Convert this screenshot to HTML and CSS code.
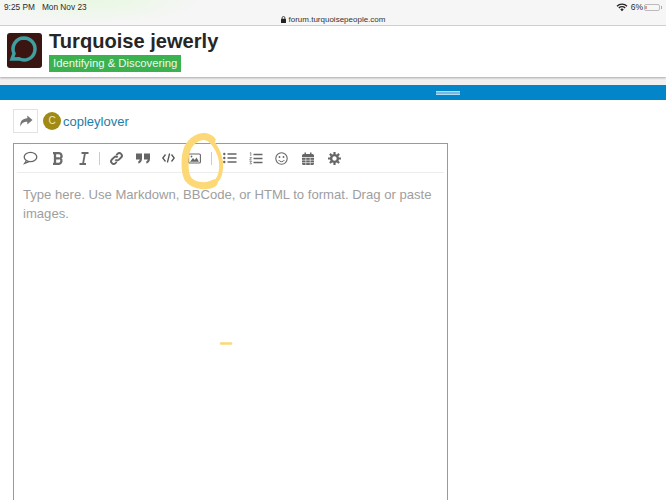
FILE: index.html
```html
<!DOCTYPE html>
<html lang="en">
<head>
<meta charset="utf-8">
<title>Turquoise jewerly</title>
<link rel="stylesheet" href="styles.css">
</head>
<body>
<div class="status">
  <div class="status-row">
    <span class="time">9:25 PM</span><span class="date">Mon Nov 23</span>
    <span class="spacer"></span>
    <svg class="wifi" width="12" height="9" viewBox="0 0 12 9"><path d="M1 3.2a7 7 0 0 1 10 0M2.8 5a4.6 4.6 0 0 1 6.4 0" fill="none" stroke="#222" stroke-width="1.3"/><path d="M4.3 6.4a2.4 2.4 0 0 1 3.4 0L6 8.2z" fill="#222"/></svg>
    <span class="pct">6%</span>
    <span class="battery"><span class="charge"></span></span><span class="nub"></span>
  </div>
  <div class="url-row">
    <svg width="5" height="7" viewBox="0 0 5 7"><rect y="2.8" width="5" height="4.2" rx=".6" fill="#222"/><path d="M1.1 3V1.9a1.4 1.4 0 0 1 2.8 0V3" fill="none" stroke="#222" stroke-width=".8"/></svg>
    <span>forum.turquoisepeople.com</span>
  </div>
</div>
<header class="site">
  <svg class="logo" width="35" height="35" viewBox="0 0 35 35"><rect width="35" height="35" rx="3" fill="#3a1512"/><path d="M17 5a11 11 0 1 1-5 20.800L5 26 7 20.500A11 11 0 0 1 17 5z" fill="none" stroke="#3f9ea0" stroke-width="3.500"/></svg>
  <div class="titles">
    <h1>Turquoise jewerly</h1>
    <span class="badge">Identifying &amp; Discovering</span>
  </div>
</header>
<div class="gap"></div>
<div class="blue"><span class="grip"></span></div>
<main>
  <div class="reply-row">
    <span class="action">
      <svg width="14" height="12" viewBox="0 0 14 12"><path d="M8.300 0.500 13.500 5 8.300 9.500V6.800C5 6.800 2.800 7.800 1.500 11.500 0.500 6.500 3.500 3.400 8.300 3.200z" fill="#777"/></svg>
    </span>
    <span class="avatar">C</span>
    <span class="user">copleylover</span>
  </div>
  <section class="editor">
    <div class="toolbar">
      <span class="tool"><svg width="15" height="14" viewBox="0 0 15 14"><ellipse cx="7.500" cy="6" rx="6.300" ry="4.700" fill="none" stroke="#666" stroke-width="1.300"/><path d="M3.500 9.500 1.500 12.500 6 10.600" fill="none" stroke="#666" stroke-width="1.200"/></svg></span>
      <span class="tool tool-b"><svg width="12" height="13" viewBox="0 0 12 13"><path d="M1 1.200h5.800a2.800 2.800 0 0 1 1.400 5.200 3 3 0 0 1-1.200 5.400H1M3 1.200v10.600M3 6.400h4.200" fill="none" stroke="#6a6a6a" stroke-width="2.300"/></svg></span>
      <span class="tool tool-i"><svg width="10" height="13" viewBox="0 0 10 13"><path d="M2.500 1h7M.5 12H7M6 1 4 12" fill="none" stroke="#6a6a6a" stroke-width="1.800"/></svg></span>
      <span class="sep"></span>
      <span class="tool tool-link"><svg width="13" height="13" viewBox="0 0 13 13"><g fill="none" stroke="#666" stroke-width="1.900"><path d="M5.300 7.700a2.500 2.500 0 0 0 3.600 0l2.200-2.200a2.500 2.500 0 0 0-3.600-3.600L6.300 3.100"/><path d="M7.700 5.300a2.500 2.500 0 0 0-3.600 0L1.900 7.500a2.500 2.500 0 0 0 3.600 3.600l1.200-1.200"/></g></svg></span>
      <span class="tool tool-quote"><svg width="14" height="11" viewBox="0 0 14 11"><path d="M0 .5h6v5.300C6 8.500 4.500 10 2.300 10.500V8.300C3.300 8 3.700 7.400 3.700 6.500H0zM8 .5h6v5.300c0 2.700-1.500 4.200-3.700 4.700V8.300c1-.3 1.400-.9 1.400-1.800H8z" fill="#666"/></svg></span>
      <span class="tool tool-code"><svg width="13" height="10" viewBox="0 0 13 10"><path d="M3.500 1.500 .8 5l2.700 3.500M9.500 1.500 12.200 5 9.500 8.500M7.600.5 5.400 9.500" fill="none" stroke="#555" stroke-width="1.300"/></svg></span>
      <span class="tool tool-img"><svg width="13" height="11" viewBox="0 0 13 11"><rect x=".6" y="1" width="11.800" height="9" rx="1" fill="none" stroke="#666" stroke-width="1.100"/><path d="M2 8.800 5 5l1.800 2 1.700-2.500 2.500 4.300z" fill="#666"/><circle cx="3.500" cy="3.500" r=".9" fill="#666"/></svg></span>
      <span class="sep sep-2"></span>
      <span class="tool tool-list"><svg width="14" height="12" viewBox="0 0 14 12"><path d="M4.500 2h9M4.500 6h9M4.500 10h9" stroke="#666" stroke-width="1.500"/><circle cx="1.300" cy="2" r="1.200" fill="#666"/><circle cx="1.300" cy="6" r="1.200" fill="#666"/><circle cx="1.300" cy="10" r="1.200" fill="#666"/></svg></span>
      <span class="tool tool-ol"><svg width="14" height="13" viewBox="0 0 14 13"><path d="M4.500 2.500h9M4.500 6.500h9M4.500 10.500h9" stroke="#666" stroke-width="1.500"/><path d="M.8 1 1.800.6V4M.6 5.600h2L.6 8h2M.6 9.500h2l-1 1 1 1.300H.6" fill="none" stroke="#666" stroke-width=".7"/></svg></span>
      <span class="tool tool-smile"><svg width="13" height="13" viewBox="0 0 13 13"><circle cx="6.500" cy="6.500" r="5.700" fill="none" stroke="#666" stroke-width="1.100"/><circle cx="4.500" cy="5" r=".9" fill="#666"/><circle cx="8.500" cy="5" r=".9" fill="#666"/><path d="M3.600 8a3.400 3.400 0 0 0 5.800 0" fill="none" stroke="#666" stroke-width="1"/></svg></span>
      <span class="tool tool-cal"><svg width="12" height="13" viewBox="0 0 12 13"><path d="M0 3.500A1.500 1.500 0 0 1 1.500 2H2.500V.5H4V2H8V.5H9.500V2h1A1.500 1.500 0 0 1 12 3.500V5H0zM0 5.800H12V11.500A1.500 1.500 0 0 1 10.500 13H1.500A1.500 1.500 0 0 1 0 11.500z" fill="#666"/><path d="M3.800 5.800V13M8.200 5.800V13M0 8.200H12M0 10.600H12" stroke="#fff" stroke-width=".6"/></svg></span>
      <span class="tool tool-gear"><svg width="13" height="13" viewBox="0 0 13 13"><circle cx="6.500" cy="6.500" r="3.400" fill="none" stroke="#666" stroke-width="2.400"/><path d="M6.500 0v13M0 6.500h13M1.900 1.900l9.200 9.200M11.100 1.900l-9.200 9.200" stroke="#666" stroke-width="2.200" stroke-dasharray="2.200 8.600 2.200"/></svg></span>
    </div>
    <p class="placeholder">Type here. Use Markdown, BBCode, or HTML to format. Drag or paste images.</p>
  </section>
</main>
<svg class="scribble" width="666" height="500" viewBox="0 0 666 500">
  <path d="M212 140C205 133 194 137 188 147 184 156 184 172 188 179 194 187 208 187 214 183" fill="none" stroke="#fcd976" stroke-width="7" stroke-linecap="round"/>
  <path d="M214 183C220 179 222 170 221 162 220 154 216 146 210 140" fill="none" stroke="#fcd976" stroke-width="4" stroke-linecap="round"/>
  <path d="M221 343.500h10" stroke="#fcd976" stroke-width="2.500" stroke-linecap="round"/>
</svg>
</body>
</html>
```

FILE: styles.css
```css
* { box-sizing: border-box; }
html, body { margin: 0; padding: 0; }
body {
  width: 666px;
  height: 500px;
  overflow: hidden;
  background: #fff;
  font-family: "Liberation Sans", Arial, sans-serif;
  position: relative;
}
.status {
  height: 26px;
  background: radial-gradient(ellipse 110px 24px at 95px 0, #e8f8e2 0%, #f6f6f6 100%);
  border-bottom: 1px solid #d4d4d4;
  color: #2a2a2a;
}
.status-row {
  height: 13px;
  padding: 1px 4px 0;
  display: flex;
  align-items: center;
  font-size: 8.300px;
}
.date { margin-left: 7px; }
.spacer { flex: 1; }
.wifi { margin-right: 3px; }
.pct { margin-right: 1px; font-size: 8.500px; }
.battery {
  width: 16px;
  height: 7px;
  border: 1px solid #bbb;
  border-radius: 2px;
  display: flex;
  padding: 1px 0 1px 0;
}
.charge { width: 2px; background: #e09a9a; }
.nub { width: 1px; height: 3px; background: #aaa; margin-left: 1px; margin-right: 0; }
.url-row {
  height: 12px;
  display: flex;
  align-items: center;
  justify-content: center;
  gap: 3px;
  font-size: 8px;
  color: #333;
}
.site {
  height: 51px;
  padding: 7px 7px 0;
  display: flex;
  gap: 7px;
  background: #fff;
  box-shadow: 0 1px 2px rgba(0, 0, 0, .3);
  position: relative;
}
.logo { flex: none; }
.titles { display: flex; flex-direction: column; align-items: flex-start; }
h1 {
  margin: -4px 0 0;
  font-size: 20.100px;
  line-height: 25px;
  font-weight: 700;
  color: #262626;
}
.badge {
  height: 17px;
  width: 132px;
  margin-top: 1px;
  padding-left: 4px;
  font-size: 11.300px;
  line-height: 17px;
  white-space: nowrap;
  color: #eef8ee;
  background: #3cb14f;
}
.gap { height: 8px; background: #f0f0f0; }
.blue {
  height: 15px;
  background: #0285c9;
  display: flex;
  align-items: center;
  padding-left: 436px;
}
.grip {
  width: 24px;
  height: 4px;
  background: #6fbce6;
  border-top: 1px solid #b0dcf2;
  border-bottom: 1px solid #b0dcf2;
}
main { padding: 9px 13px 0; }
.reply-row { display: flex; align-items: center; height: 24px; }
.action {
  width: 25px;
  height: 24px;
  border: 1px solid #e2e2e2;
  display: flex;
  align-items: center;
  justify-content: center;
  margin-right: 5px;
}
.avatar {
  width: 18px;
  height: 18px;
  border-radius: 50%;
  background: #a18a14;
  color: #f0e6c0;
  font-size: 10px;
  line-height: 18px;
  text-align: center;
  margin-right: 2px;
}
.user { color: #1a7ea8; font-size: 13px; }
.editor {
  margin-top: 10px;
  width: 435px;
  height: 357px;
  border: 1px solid #9a9a9a;
  border-bottom: 0;
  padding: 0 1px;
}
.toolbar {
  height: 29px;
  border-bottom: 1px solid #ececec;
  display: flex;
  align-items: center;
  padding-left: 6px;
  margin: 0 2px;
}
.tool { display: flex; flex: none; }
.tool-b { margin-left: 14px; }
.tool-i { margin-left: 15px; }
.sep { width: 1px; height: 13px; background: #ccc; margin-left: 10px; flex: none; }
.tool-link { margin-left: 10px; }
.tool-quote { margin-left: 13px; }
.tool-code { margin-left: 12px; }
.tool-img { margin-left: 13px; }
.sep-2 { margin-left: 10px; }
.tool-list { margin-left: 11px; }
.tool-ol { margin-left: 12px; }
.tool-smile { margin-left: 12px; }
.tool-cal { margin-left: 14px; }
.tool-gear { margin-left: 14px; }
.placeholder {
  margin: 12px 0 0;
  padding: 0 8px;
  font-size: 13.100px;
  line-height: 19px;
  color: #9e9e9e;
}
.scribble { position: absolute; left: 0; top: 0; pointer-events: none; filter: blur(.4px); }
```
